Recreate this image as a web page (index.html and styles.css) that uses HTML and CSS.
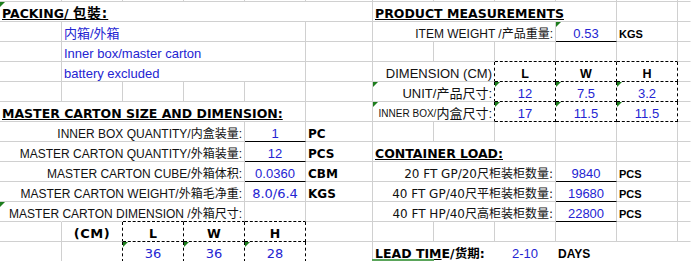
FILE: index.html
```html
<!DOCTYPE html>
<html lang="zh">
<head>
<meta charset="utf-8">
<title>Packing sheet</title>
<link rel="stylesheet" href="styles.css">
</head>
<body>
<div class="sheet">
  <!-- top sliver row -->
  <div class="c"></div><div class="c"></div><div class="c"></div><div class="c"></div><div class="c"></div><div class="c"></div>
  <div class="c"></div><div class="c"></div><div class="c"></div><div class="c"></div><div class="c"></div><div class="c nr"></div>

  <!-- row 0 -->
  <div class="c s6 tri"><span class="hd">PACKING/ <span class="cjk">包裝:</span></span></div>
  <div class="c s4"><span class="hd">PRODUCT MEASUREMENTS</span></div>
  <div class="c"></div>
  <div class="c nr"></div>

  <!-- row 1 -->
  <div class="c"></div>
  <div class="c s4 note">内箱/外箱</div>
  <div class="c"></div>
  <div class="c s3 r">ITEM WEIGHT /产品重量:</div>
  <div class="c val ub tri">0.53</div>
  <div class="c"><span class="u2">KGS</span></div>
  <div class="c nr"></div>

  <!-- row 2 -->
  <div class="c"></div>
  <div class="c s4 note">Inner box/master carton</div>
  <div class="c"></div>
  <div class="c"></div>
  <div class="c"></div>
  <div class="c db"></div>
  <div class="c db"></div>
  <div class="c db"></div>
  <div class="c nr"></div>

  <!-- row 3 -->
  <div class="c"></div>
  <div class="c s4 note">battery excluded</div>
  <div class="c"></div>
  <div class="c s2 r dr l13">DIMENSION (CM)</div>
  <div class="c ctr dr db"><span class="bh">L</span></div>
  <div class="c ctr dr db"><span class="bh">W</span></div>
  <div class="c ctr dr db"><span class="bh">H</span></div>
  <div class="c nr"></div>

  <!-- row 4 -->
  <div class="c"></div>
  <div class="c"></div>
  <div class="c"></div>
  <div class="c"></div>
  <div class="c"></div>
  <div class="c"></div>
  <div class="c s2 r dr l13 tri">UNIT/产品尺寸:</div>
  <div class="c val dr db tri">12</div>
  <div class="c val dr db tri">7.5</div>
  <div class="c val dr db tri">3.2</div>
  <div class="c nr"></div>

  <!-- row 5 -->
  <div class="c s5"><span class="hd">MASTER CARTON SIZE AND DIMENSION:</span></div>
  <div class="c"></div>
  <div class="c s2 r dr l13 tri"><span class="sm">INNER BOX/</span>内盒尺寸:</div>
  <div class="c val dr db tri">17</div>
  <div class="c val dr db tri">11.5</div>
  <div class="c val dr db tri">11.5</div>
  <div class="c nr"></div>

  <!-- row 6 -->
  <div class="c s4 r">INNER BOX QUANTITY/内盒装量:</div>
  <div class="c val ub">1</div>
  <div class="c"><span class="u1">PC</span></div>
  <div class="c"></div>
  <div class="c"></div>
  <div class="c"></div>
  <div class="c"></div>
  <div class="c"></div>
  <div class="c nr"></div>

  <!-- row 7 -->
  <div class="c s4 r">MASTER CARTON QUANTITY/外箱装量:</div>
  <div class="c val ub">12</div>
  <div class="c"><span class="u1">PCS</span></div>
  <div class="c s3"><span class="hd">CONTAINER LOAD:</span></div>
  <div class="c"></div>
  <div class="c"></div>
  <div class="c nr"></div>

  <!-- row 8 -->
  <div class="c s4 r">MASTER CARTON CUBE/外箱体积:</div>
  <div class="c val ub">0.0360</div>
  <div class="c"><span class="u1">CBM</span></div>
  <div class="c s3 r lt">20 FT GP/20尺柜装柜数量:</div>
  <div class="c val ub">9840</div>
  <div class="c"><span class="u2">PCS</span></div>
  <div class="c nr"></div>

  <!-- row 9 -->
  <div class="c s4 r">MASTER CARTON WEIGHT/外箱毛净重:</div>
  <div class="c val vt">8.0/6.4</div>
  <div class="c"><span class="u1">KGS</span></div>
  <div class="c s3 r lt">40 FT GP/40尺平柜装柜数量:</div>
  <div class="c val ub">19680</div>
  <div class="c"><span class="u2">PCS</span></div>
  <div class="c nr"></div>

  <!-- row 10 -->
  <div class="c nr tri"></div>
  <div class="c nr"></div>
  <div class="c nr db"></div>
  <div class="c r db">MASTER CARTON DIMENSION /外箱尺寸:</div>
  <div class="c db"></div>
  <div class="c"></div>
  <div class="c s3 r lt">40 FT HP/40尺高柜装柜数量:</div>
  <div class="c val ub">22800</div>
  <div class="c"><span class="u2">PCS</span></div>
  <div class="c nr"></div>

  <!-- row 11 -->
  <div class="c"></div>
  <div class="c ctr dr"><span class="cm">(CM)</span></div>
  <div class="c ctr dr db"><span class="bh2">L</span></div>
  <div class="c ctr dr db"><span class="bh2">W</span></div>
  <div class="c ctr dr db"><span class="bh2">H</span></div>
  <div class="c"></div>
  <div class="c"></div>
  <div class="c"></div>
  <div class="c"></div>
  <div class="c"></div>
  <div class="c"></div>
  <div class="c nr"></div>

  <!-- row 12 -->
  <div class="c"></div>
  <div class="c dr"></div>
  <div class="c val vt dr tri">36</div>
  <div class="c val vt dr tri">36</div>
  <div class="c val vt dr tri">28</div>
  <div class="c"></div>
  <div class="c s2 nr sel"><span class="hd"><span class="ul">LEAD TIM</span>E/货期:</span></div>
  <div class="c val nr">2-10</div>
  <div class="c nr"><span class="days">DAYS</span></div>
  <div class="c nr"></div>
  <div class="c nr"></div>
</div>
</body>
</html>
```

FILE: styles.css
```css
* { box-sizing: border-box; }
html, body { margin: 0; padding: 0; background: #fff; }
body { width: 691px; height: 261px; overflow: hidden; }

.sheet {
  display: grid;
  grid-template-columns: 62px 61px 61px 61px 61px 67px 61px 61px 61px 61px 61px 1fr;
  grid-template-rows: 2px repeat(13, 20px);
  font-family: "Liberation Sans", Arial, "Noto Sans CJK SC", sans-serif;
  font-size: 12px;
  color: #111;
}

.c {
  position: relative;
  display: flex;
  align-items: flex-end;
  min-width: 0;
  padding: 0 2px;
  line-height: 14px;
  white-space: nowrap;
  border-right: 1px solid #d0d0d0;
  border-bottom: 1px solid #d0d0d0;
}

.s2 { grid-column: span 2; }
.s3 { grid-column: span 3; }
.s4 { grid-column: span 4; }
.s5 { grid-column: span 5; }
.s6 { grid-column: span 6; }

.nr { border-right-color: transparent; }
.r { justify-content: flex-end; }
.ctr { justify-content: center; }
.ub { border-bottom: 1px solid #000; }
.db { border-bottom: 1px dashed #000; }
.dr { border-right: 1px dashed #000; }

.tri::before {
  content: "";
  position: absolute;
  left: 0;
  top: 0;
  width: 0;
  height: 0;
  border-top: 5px solid #1d7d1d;
  border-right: 5px solid transparent;
}

.sel::after {
  content: "";
  position: absolute;
  left: -1px;
  bottom: 0;
  width: 62px;
  height: 2px;
  background: #5aa55a;
}

.hd {
  font-family: "DejaVu Sans", "Noto Sans CJK SC", sans-serif;
  font-weight: bold;
  font-size: 12.5px;
  color: #000;
  text-decoration: underline;
}
.hd .cjk { font-size: 13.5px; letter-spacing: 1px; }
.hd .ul { text-decoration: underline; }
.sel .hd { text-decoration: none; }

.note { color: #2424d2; font-size: 13px; }
.val { justify-content: center; color: #2424d2; font-size: 13px; }
.vt { font-family: "DejaVu Sans", "Noto Sans CJK SC", sans-serif; font-size: 13px; }
.l13 { font-size: 13px; }
.lt { font-family: "DejaVu Sans", "Noto Sans CJK SC", sans-serif; font-size: 12px; }
.sm { font-size: 10px; }

.u1 {
  font-family: "DejaVu Sans", sans-serif;
  font-weight: bold;
  font-size: 12px;
  color: #000;
}
.u2 { font-weight: bold; font-size: 11px; color: #000; }
.days { font-weight: bold; font-size: 12px; color: #000; }
.bh { font-weight: bold; font-size: 12.5px; color: #000; }
.bh2 {
  font-family: "DejaVu Sans", sans-serif;
  font-weight: bold;
  font-size: 12.5px;
  color: #000;
}
.cm {
  font-family: "DejaVu Sans", sans-serif;
  font-weight: bold;
  font-size: 13px;
  letter-spacing: 0.5px;
  color: #000;
}
```
